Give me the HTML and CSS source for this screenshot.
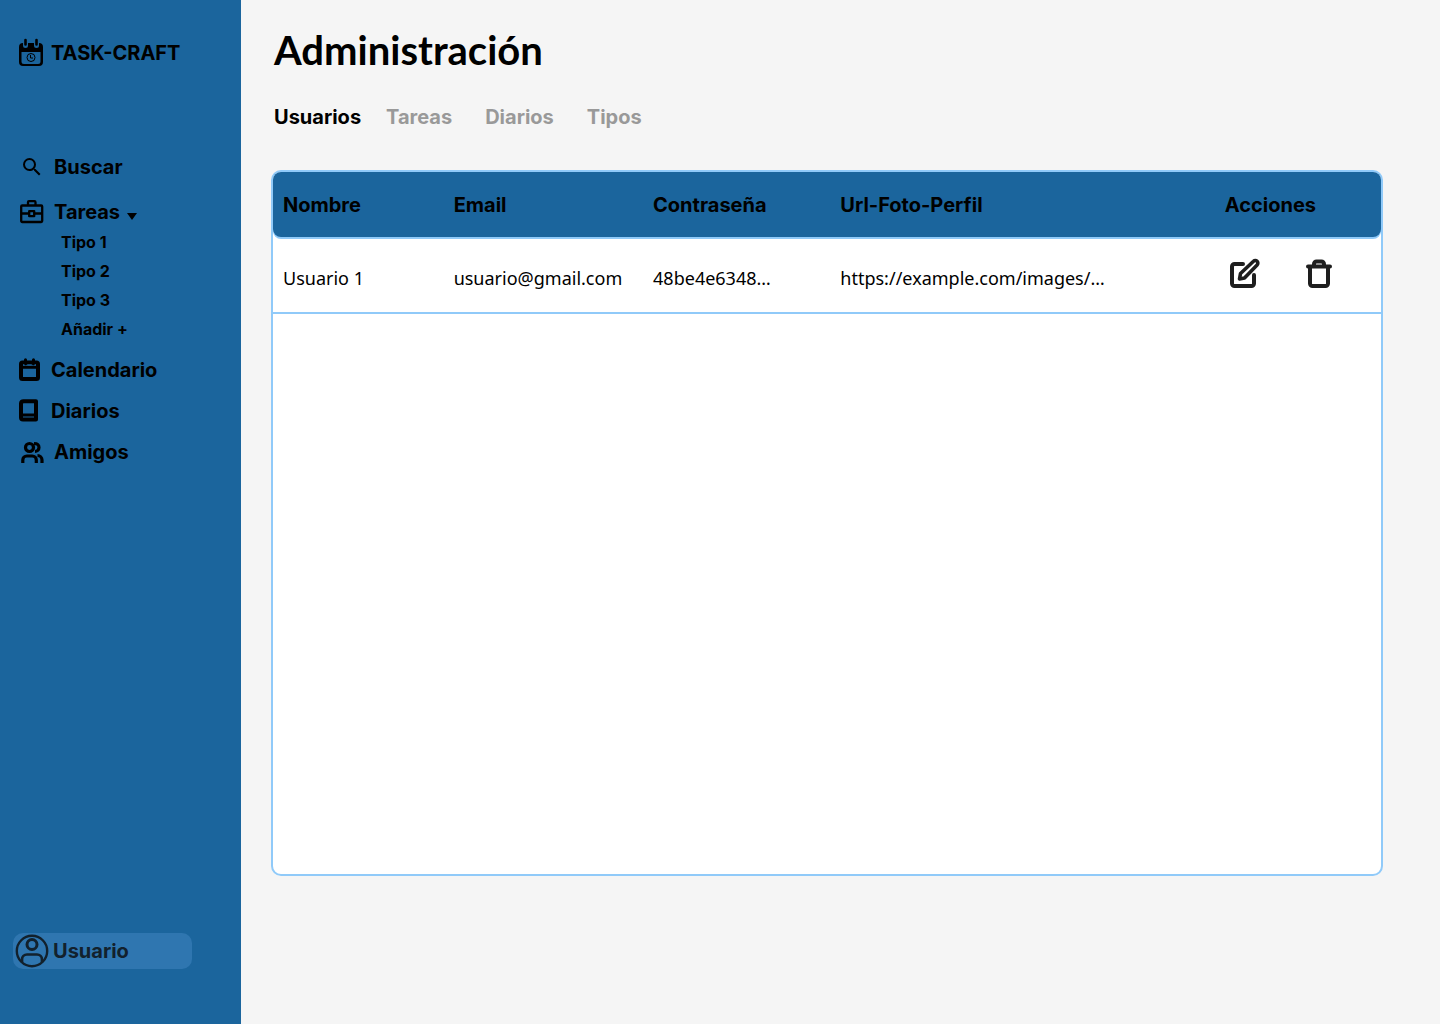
FILE: index.html
```html
<!DOCTYPE html>
<html lang="es">
<head>
<meta charset="utf-8">
<meta name="viewport" content="width=device-width, initial-scale=1">
<title>Administración - TASK-CRAFT</title>
<link rel="stylesheet" href="styles.css">
</head>
<body>
<div class="app">
  <aside class="sidebar">
    <a class="brand" href="#">
      <svg class="brand-icon" width="26" height="30" viewBox="0 0 26 30" aria-hidden="true">
        <path fill="currentColor" fill-rule="evenodd" d="M5 5h16a4 4 0 0 1 4 4v15a4 4 0 0 1-4 4H5a4 4 0 0 1-4-4V9a4 4 0 0 1 4-4zM3.500 14v9.500a2.500 2.500 0 0 0 2.500 2.500h14a2.500 2.500 0 0 0 2.500-2.500V14z"/>
        <path class="halo" d="M7.500 2v5.500M18.500 2v5.500"/>
        <path fill="none" stroke="currentColor" stroke-width="2.600" stroke-linecap="round" d="M7.500 2v4.500M18.500 2v4.500"/>
        <circle cx="13" cy="19.500" r="4" fill="none" stroke="currentColor" stroke-width="1"/>
        <path fill="none" stroke="currentColor" stroke-width="1" d="M12.500 17v3h2.500"/>
      </svg>
      TASK-CRAFT
    </a>
    <nav class="nav">
      <a class="nav-link nav-link-inset" href="#">
        <svg width="24" height="24" viewBox="0 0 24 24" aria-hidden="true"><path fill="currentColor" d="M15.500 14h-.790l-.280-.270A6.471 6.471 0 0 0 16 9.500 6.500 6.500 0 1 0 9.500 16c1.610 0 3.090-.590 4.230-1.570l.270.280v.790l5 4.990L20.490 19l-4.990-5zm-6 0C7.010 14 5 11.990 5 9.500S7.010 5 9.500 5 14 7.010 14 9.500 11.990 14 9.500 14z"/></svg>
        Buscar
      </a>
      <div class="nav-group">
        <a class="nav-link nav-link-inset" href="#">
          <svg width="24" height="24" viewBox="0 0 24 24" fill="none" stroke="currentColor" stroke-width="2.300" stroke-linejoin="round" aria-hidden="true"><rect x="1.200" y="5.500" width="21" height="16.500" rx="1"/><path d="M8 5.500V2.200a1 1 0 0 1 1-1h5.500a1 1 0 0 1 1 1V5.500M1 13.500h8M14.500 13.500H22M9.200 11.200h5v5h-5z"/></svg>
          Tareas
          <svg class="caret" width="10" height="7" viewBox="0 0 10 7" aria-hidden="true"><path fill="currentColor" d="M0 0h10L5 7z"/></svg>
        </a>
        <ul class="subnav">
          <li><a href="#">Tipo 1</a></li>
          <li><a href="#">Tipo 2</a></li>
          <li><a href="#">Tipo 3</a></li>
          <li><a href="#">Añadir +</a></li>
        </ul>
      </div>
      <a class="nav-link" href="#">
        <svg width="24" height="24" viewBox="0 0 24 24" fill="none" stroke="currentColor" stroke-width="4" stroke-linecap="round" stroke-linejoin="round" aria-hidden="true"><rect x="4" y="4.500" width="17" height="16.500" rx="1.500"/><path stroke-width="3" d="M4 9.200h17M8.500 1.800v4M16.500 1.800v4"/><path stroke="#1b659d" stroke-width="1.200" stroke-linecap="butt" d="M10.500 7h4M6 7h1.500M17.500 7h1.500"/></svg>
        Calendario
      </a>
      <a class="nav-link" href="#">
        <svg width="24" height="24" viewBox="0 0 24 24" fill="none" stroke="currentColor" stroke-width="4" stroke-linejoin="round" aria-hidden="true"><path d="M4 18.500V4.500A2.500 2.500 0 0 1 6.500 2.200H19v18.300H6A2 2 0 0 1 4 18.500z"/><path stroke-width="3" d="M4 16h15"/></svg>
        Diarios
      </a>
      <a class="nav-link nav-link-inset" href="#">
        <svg width="24" height="24" viewBox="0 0 24 24" fill="none" stroke="currentColor" stroke-width="3.200" aria-hidden="true"><circle cx="9.500" cy="7.500" r="4"/><path d="M2.800 23v-3a4 4 0 0 1 4-4h5.500a4 4 0 0 1 4 4V23M14 3.500c3 0 5 1.500 5 4s-2 4-4 4M17.500 15.500a4.500 4.500 0 0 1 4.500 4.500v3"/></svg>
        Amigos
      </a>
    </nav>
    <button class="user" type="button">
      <svg width="34" height="34" viewBox="0 0 34 34" fill="none" stroke="currentColor" aria-hidden="true"><circle cx="17" cy="17" r="15.200" stroke-width="2.400"/><circle cx="17" cy="10.500" r="5" stroke-width="3"/><path stroke-width="2.700" d="M7 28v-2.500a5 5 0 0 1 5-5h10a5 5 0 0 1 5 5V28"/></svg>
      Usuario
    </button>
  </aside>

  <main class="main">
    <h1 class="title">Administración</h1>
    <nav class="tabs" aria-label="Secciones">
      <a class="tab tab-active" href="#" aria-current="page">Usuarios</a>
      <a class="tab" href="#">Tareas</a>
      <a class="tab" href="#">Diarios</a>
      <a class="tab" href="#">Tipos</a>
    </nav>
    <section class="card">
      <table class="users">
        <thead>
          <tr>
            <th class="col-name" scope="col">Nombre</th>
            <th class="col-email" scope="col">Email</th>
            <th class="col-pass" scope="col">Contraseña</th>
            <th class="col-url" scope="col">Url-Foto-Perfil</th>
            <th class="col-actions" scope="col">Acciones</th>
          </tr>
        </thead>
        <tbody>
          <tr>
            <td>Usuario 1</td>
            <td>usuario@gmail.com</td>
            <td>48be4e6348…</td>
            <td>https://example.com/images/…</td>
            <td>
              <div class="actions">
                <button class="action" type="button" aria-label="Editar">
                  <svg width="32" height="32" viewBox="0 0 32 32" fill="none" stroke="currentColor" stroke-width="4" stroke-linecap="round" stroke-linejoin="round" aria-hidden="true"><path d="M14 6H5.500A2.500 2.500 0 0 0 3 8.500v17A2.500 2.500 0 0 0 5.500 28h17a2.500 2.500 0 0 0 2.500-2.500V17"/><path stroke-width="3.600" d="M10.500 21l1-5.500L24.500 3.300a2.500 2.500 0 0 1 3.600 3.600L15.500 20z"/></svg>
                </button>
                <button class="action" type="button" aria-label="Eliminar">
                  <svg width="32" height="32" viewBox="0 0 32 32" fill="none" stroke="currentColor" stroke-width="4" stroke-linecap="round" stroke-linejoin="round" aria-hidden="true"><path d="M5 8.500h22M7 8.500V25.500A2.500 2.500 0 0 0 9.500 28h13a2.500 2.500 0 0 0 2.500-2.500V8.500M11 8V6a2.500 2.500 0 0 1 2.500-2.500h5A2.500 2.500 0 0 1 21 6v2"/></svg>
                </button>
              </div>
            </td>
          </tr>
        </tbody>
      </table>
    </section>
  </main>
</div>
</body>
</html>
```
FILE: styles.css
```css
* { box-sizing: border-box; }

body {
  margin: 0;
  background: #f5f5f5;
  color: #000;
  font: 700 20px/24px Inter, "Liberation Sans", sans-serif;
}

a { color: inherit; text-decoration: none; }

button {
  border: 0;
  padding: 0;
  background: none;
  font: inherit;
  cursor: pointer;
}

svg { display: block; flex: none; }

.app { display: flex; min-height: 100vh; }

.sidebar {
  flex: none;
  display: flex;
  flex-direction: column;
  align-items: flex-start;
  width: 241px;
  padding: 38px 13px 55px;
  background: #1b659d;
}

.brand {
  display: flex;
  align-items: center;
  gap: 7px;
  padding-left: 5px;
}

.halo {
  fill: none;
  stroke: #1b659d;
  stroke-width: 5;
  stroke-linecap: round;
}

.nav {
  display: flex;
  flex-direction: column;
  gap: 17px;
  margin-top: 87px;
  padding-left: 4px;
}

.nav-link { display: flex; align-items: center; gap: 10px; }

.nav-link-inset { padding-left: 3px; }

.nav-group { margin-top: 4px; }

.caret { margin: 8px 0 0 -3px; }

.subnav {
  display: flex;
  flex-direction: column;
  gap: 9px;
  margin: 8px 0 0;
  padding: 0 0 2px 44px;
  list-style: none;
  font-size: 16px;
  line-height: 20px;
}

.user {
  display: flex;
  align-items: center;
  gap: 4px;
  width: 179px;
  margin-top: auto;
  padding: 1px 2px;
  border-radius: 10px;
  background: #2f76b0;
  color: #12212d;
}

.main {
  flex: 1;
  display: flex;
  flex-direction: column;
  min-width: 0;
  padding: 24px 57px 148px 30px;
}

.title {
  margin: 0;
  padding-left: 3px;
  font: 700 40px/52px Lato, "Open Sans", sans-serif;
}

.tabs {
  display: flex;
  gap: 33px;
  margin: 29px 0 41px;
  padding-left: 3px;
}

.tab { color: #999; }

.tab-active { margin-right: -8px; color: #000; }

.card {
  flex: 1;
  border: 2px solid #90caf9;
  border-radius: 10px;
  background: #fff;
}

.users {
  width: 100%;
  table-layout: fixed;
  border-spacing: 0;
  text-align: left;
}

.users th {
  height: 65px;
  padding: 0 10px;
  background: #1b659d;
  box-shadow: 0 2px 0 #90caf9;
  font-weight: 700;
}

.users th:first-child { border-radius: 8px 0 0 8px; }

.users th:last-child { border-radius: 0 8px 8px 0; }

.users td {
  height: 77px;
  padding: 6px 10px 0;
  border-bottom: 2px solid #90caf9;
  font: 400 18px/24px "Noto Sans", "Open Sans", sans-serif;
  white-space: nowrap;
}

.col-name { width: 15.4%; }
.col-email { width: 18%; }
.col-pass { width: 16.9%; }
.col-url { width: 34.7%; }
.col-actions { width: 15%; }

.actions { display: flex; gap: 42px; padding: 0 0 8px 4px; }

.action { color: #1e1e1e; }
```
